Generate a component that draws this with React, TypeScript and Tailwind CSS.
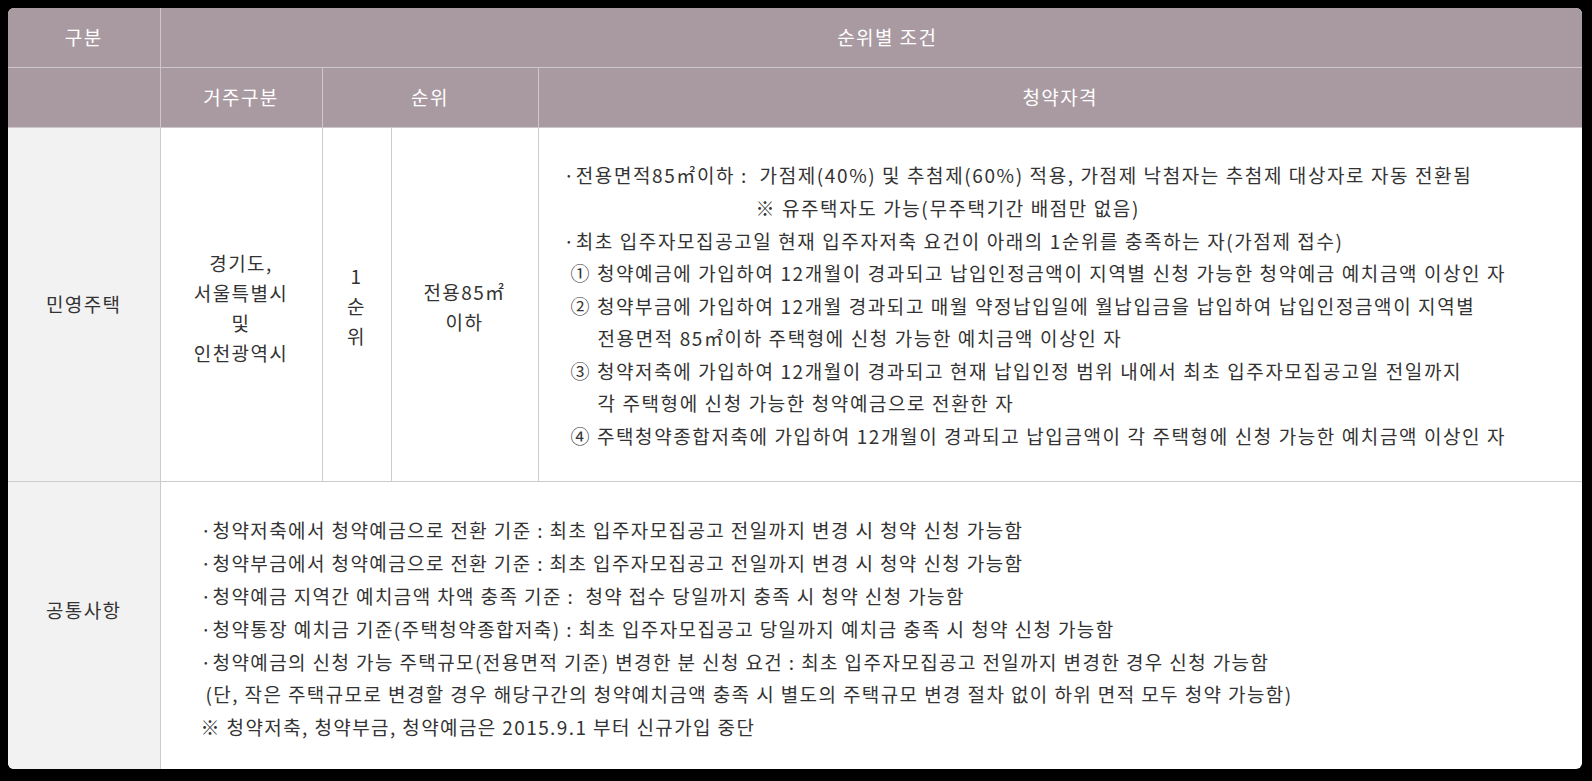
import React from "react";

const bodyLines: { text: string; indent: string }[] = [
  { text: "·전용면적85㎡이하 :  가점제(40%) 및 추첨제(60%) 적용, 가점제 낙첨자는 추첨제 대상자로 자동 전환됨", indent: "" },
  { text: "※ 유주택자도 가능(무주택기간 배점만 없음)", indent: "pl-[192px]" },
  { text: "·최초 입주자모집공고일 현재 입주자저축 요건이 아래의 1순위를 충족하는 자(가점제 접수)", indent: "" },
  { text: "① 청약예금에 가입하여 12개월이 경과되고 납입인정금액이 지역별 신청 가능한 청약예금 예치금액 이상인 자", indent: "pl-[7px]" },
  { text: "② 청약부금에 가입하여 12개월 경과되고 매월 약정납입일에 월납입금을 납입하여 납입인정금액이 지역별", indent: "pl-[7px]" },
  { text: "전용면적 85㎡이하 주택형에 신청 가능한 예치금액 이상인 자", indent: "pl-[34px]" },
  { text: "③ 청약저축에 가입하여 12개월이 경과되고 현재 납입인정 범위 내에서 최초 입주자모집공고일 전일까지", indent: "pl-[7px]" },
  { text: "각 주택형에 신청 가능한 청약예금으로 전환한 자", indent: "pl-[34px]" },
  { text: "④ 주택청약종합저축에 가입하여 12개월이 경과되고 납입금액이 각 주택형에 신청 가능한 예치금액 이상인 자", indent: "pl-[7px]" },
];

const commonLines: { text: string; indent: string }[] = [
  { text: "·청약저축에서 청약예금으로 전환 기준 : 최초 입주자모집공고 전일까지 변경 시 청약 신청 가능함", indent: "" },
  { text: "·청약부금에서 청약예금으로 전환 기준 : 최초 입주자모집공고 전일까지 변경 시 청약 신청 가능함", indent: "" },
  { text: "·청약예금 지역간 예치금액 차액 충족 기준 :  청약 접수 당일까지 충족 시 청약 신청 가능함", indent: "" },
  { text: "·청약통장 예치금 기준(주택청약종합저축) : 최초 입주자모집공고 당일까지 예치금 충족 시 청약 신청 가능함", indent: "" },
  { text: "·청약예금의 신청 가능 주택규모(전용면적 기준) 변경한 분 신청 요건 : 최초 입주자모집공고 전일까지 변경한 경우 신청 가능함", indent: "" },
  { text: "(단, 작은 주택규모로 변경할 경우 해당구간의 청약예치금액 충족 시 별도의 주택규모 변경 절차 없이 하위 면적 모두 청약 가능함)", indent: "pl-[5px]" },
  { text: "※ 청약저축, 청약부금, 청약예금은 2015.9.1 부터 신규가입 중단", indent: "" },
];

const th = "border border-[#cfc8cb] bg-[#a99aa1] text-white font-normal text-center align-middle";
const td = "border border-[#cccccc] text-center align-middle";

export default function App() {
  return (
    <div className="min-h-screen w-full bg-black p-2">
      <div
        className="w-[1574px] h-[761px] overflow-hidden rounded-md bg-white text-[#333333] text-[19px] tracking-[1.4px]"
        style={{ fontFamily: '"Noto Sans CJK KR", "Noto Sans", sans-serif' }}
      >
        <table className="w-full h-full table-fixed border-collapse">
          <colgroup>
            <col className="w-[152px]" />
            <col className="w-[162px]" />
            <col className="w-[69px]" />
            <col className="w-[147px]" />
            <col />
          </colgroup>
          <thead>
            <tr className="h-[59px]">
              <th className={`${th} border-l-0 border-t-0`}>구분</th>
              <th className={`${th} border-r-0 border-t-0 pl-[32px]`} colSpan={4}>순위별 조건</th>
            </tr>
            <tr className="h-[60px]">
              <th className={`${th} border-l-0`}></th>
              <th className={th}>거주구분</th>
              <th className={th} colSpan={2}>순위</th>
              <th className={`${th} border-r-0`}>청약자격</th>
            </tr>
          </thead>
          <tbody>
            <tr className="h-[354px]">
              <td className={`${td} border-l-0 bg-[#f2f2f2]`}>민영주택</td>
              <td className={`${td} leading-[30px] pt-[8px]`}>
                경기도,
                <br />
                서울특별시
                <br />및<br />
                인천광역시
              </td>
              <td className={`${td} leading-[30px] pt-[4px]`}>
                1<br />순<br />위
              </td>
              <td className={`${td} leading-[30px] pt-[6px]`}>
                전용85㎡
                <br />
                이하
              </td>
              <td className={`${td} border-r-0 text-left pl-[25px] pt-[4px] tracking-[1.6px]`}>
                {bodyLines.map((l, i) => (
                  <div key={i} className={`leading-[32.6px] whitespace-pre ${l.indent}`}>
                    {l.text}
                  </div>
                ))}
              </td>
            </tr>
            <tr>
              <td className={`${td} border-l-0 border-b-0 bg-[#f2f2f2] pb-[31px]`}>공통사항</td>
              <td className={`${td} border-r-0 border-b-0 text-left pl-[40px] pt-[8px]`} colSpan={4}>
                {commonLines.map((l, i) => (
                  <div key={i} className={`leading-[32.8px] whitespace-pre ${l.indent}`}>
                    {l.text}
                  </div>
                ))}
              </td>
            </tr>
          </tbody>
        </table>
      </div>
    </div>
  );
}
